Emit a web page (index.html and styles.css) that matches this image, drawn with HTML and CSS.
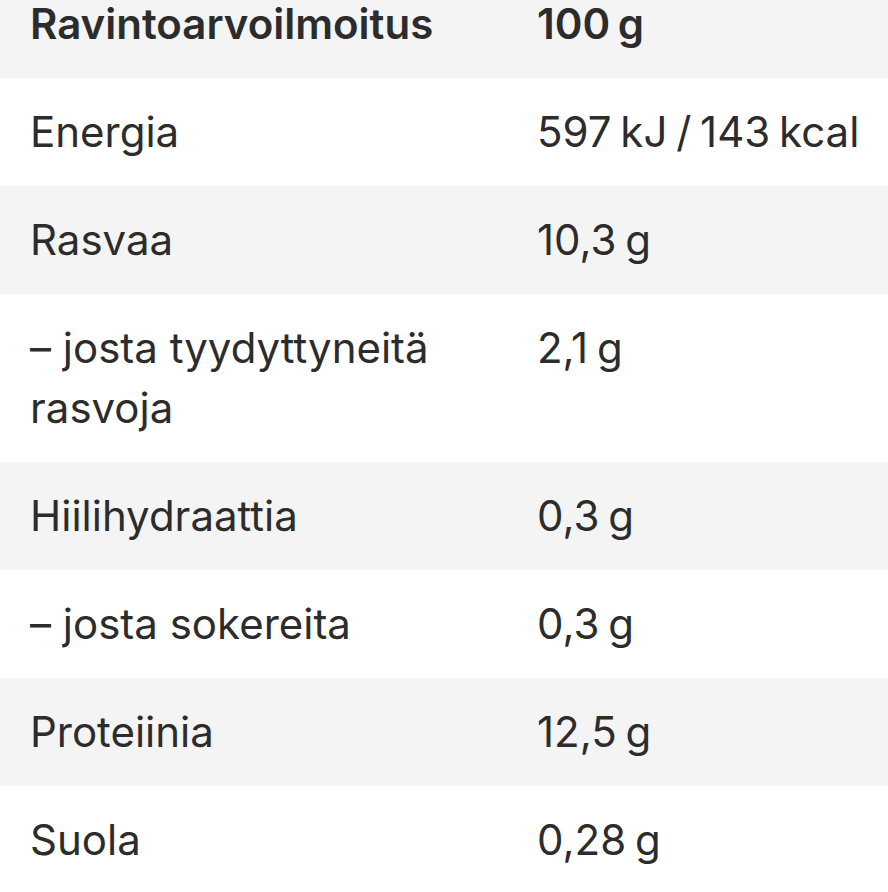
FILE: index.html
```
<!DOCTYPE html>
<html lang="fi">
<head>
<meta charset="utf-8">
<link rel="stylesheet" href="styles.css">
</head>
<body>
<div class="table">
  <div class="row head"><div class="name">Ravintoarvoilmoitus</div><div class="val">100 g</div></div>
  <div class="row"><div class="name">Energia</div><div class="val">597 kJ / 143 kcal</div></div>
  <div class="row"><div class="name">Rasvaa</div><div class="val">10,3 g</div></div>
  <div class="row"><div class="name">– josta tyydyttyneitä rasvoja</div><div class="val">2,1 g</div></div>
  <div class="row"><div class="name">Hiilihydraattia</div><div class="val">0,3 g</div></div>
  <div class="row"><div class="name">– josta sokereita</div><div class="val">0,3 g</div></div>
  <div class="row"><div class="name">Proteiinia</div><div class="val">12,5 g</div></div>
  <div class="row"><div class="name">Suola</div><div class="val">0,28 g</div></div>
</div>
</body>
</html>
```
FILE: styles.css
```
html, body {
  margin: 0;
  padding: 0;
  background: #ffffff;
}
body {
  font-family: Inter, "Noto Sans", sans-serif;
  color: #2c2c2c;
  font-size: 42px;
  line-height: 60px;
  overflow: hidden;
}
.row {
  display: grid;
  grid-template-columns: 507px 1fr;
  padding: 24px 30px;
  background: #ffffff;
}
.row:nth-child(odd) {
  background: #f4f4f4;
}
.name {
  padding-right: 40px;
}
.val {
  white-space: nowrap;
  word-spacing: -3px;
}
.head {
  font-weight: 600;
  line-height: 48px;
  padding-top: 0;
  padding-bottom: 30px;
}
```
